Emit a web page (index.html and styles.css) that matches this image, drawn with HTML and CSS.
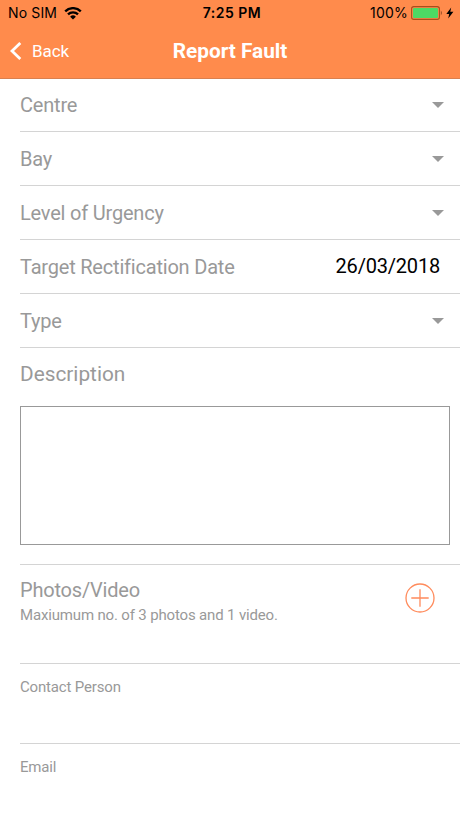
FILE: index.html
```html
<!DOCTYPE html>
<html lang="en">
<head>
    <meta charset="UTF-8">
    <meta name="viewport" content="width=device-width, initial-scale=1.0">
    <title>Report Fault</title>
    <link rel="stylesheet" href="styles.css">
</head>
<body>
    <header class="header">
        <div class="status-bar">
            <div class="status-left">
                <span class="carrier">No SIM</span>
                <svg class="wifi" width="18" height="13" viewBox="0 0 18 13">
                    <path d="M1.2 4.4a10.9 10.9 0 0 1 15.6 0M4 7.4a7 7 0 0 1 10 0" fill="none" stroke="#000" stroke-width="2.3"/>
                    <path d="M9 12.6L6.1 9.7a4.1 4.1 0 0 1 5.8 0z"/>
                </svg>
            </div>
            <div class="time">7:25 PM</div>
            <div class="status-right">
                <span class="percent">100%</span>
                <svg class="battery" width="43" height="14" viewBox="0 0 43 14">
                    <rect x="0.6" y="0.6" width="27.8" height="12.8" rx="2.2" fill="none" stroke="#a84e1c" stroke-width="1.1"/>
                    <rect x="2" y="2" width="25" height="10" rx="1" fill="#4cd964"/>
                    <path d="M29.8 4.6q2.4 2.4 0 4.8z" fill="#9c5027"/>
                    <path d="M40.2 1.4L35.3 7.9h2.9L37.2 12.4l5.2-6.6h-3.1z"/>
                </svg>
            </div>
        </div>
        <nav class="nav-bar">
            <a class="back">
                <svg width="12" height="18" viewBox="0 0 12 18">
                    <path d="M10.3 1L2 9l8.3 8" fill="none" stroke="#fff" stroke-width="2.8"/>
                </svg>
                <span>Back</span>
            </a>
            <h1 class="title">Report Fault</h1>
        </nav>
    </header>

    <main class="form">
        <div class="row">
            <span class="label">Centre</span>
            <span class="arrow"></span>
        </div>
        <div class="row">
            <span class="label">Bay</span>
            <span class="arrow"></span>
        </div>
        <div class="row">
            <span class="label">Level of Urgency</span>
            <span class="arrow"></span>
        </div>
        <div class="row">
            <span class="label">Target Rectification Date</span>
            <span class="date">26/03/2018</span>
        </div>
        <div class="row">
            <span class="label">Type</span>
            <span class="arrow"></span>
        </div>
        <div class="description">
            <label class="label wide" for="description">Description</label>
            <textarea id="description" class="textarea"></textarea>
        </div>
        <div class="photos">
            <div class="photos-text">
                <span class="label">Photos/Video</span>
                <span class="hint">Maxiumum no. of 3 photos and 1 video.</span>
            </div>
            <svg class="add" width="30" height="30" viewBox="0 0 30 30">
                <circle cx="15" cy="15" r="14" />
                <path d="M15 6.3v17.4M6.3 15h17.4" />
            </svg>
        </div>
        <div class="field">
            <span class="small-label">Contact Person</span>
        </div>
        <div class="field last">
            <span class="small-label">Email</span>
        </div>
    </main>
</body>
</html>
```

FILE: styles.css
```css
* {
    box-sizing: border-box;
}

body {
    margin: 0;
    background: white;
    font-family: Roboto, "Liberation Sans", sans-serif;
    color: #999;
    height: 818px;
    overflow: hidden;
}

/* Header */
.header {
    height: 79px;
    background: #ff8b4c;
    border-bottom: 1px solid #d9804f;
}

.status-bar {
    display: grid;
    grid-template-columns: 1fr auto 1fr;
    align-items: center;
    height: 26px;
    padding: 0 6px 0 8px;
    font-family: Inter, "Liberation Sans", sans-serif;
    font-size: 14px;
    line-height: 16px;
    color: black;
}

.status-left {
    display: flex;
    align-items: center;
    gap: 7px;
}

.status-right {
    display: flex;
    align-items: center;
    justify-content: flex-end;
    gap: 3px;
}

.carrier {
    letter-spacing: 0.15px;
}

.time {
    font-weight: 600;
    letter-spacing: 0.5px;
    padding-left: 2px;
}

.percent {
    letter-spacing: 0.2px;
}

.nav-bar {
    display: grid;
    grid-template-columns: 1fr auto 1fr;
    align-items: center;
    height: 50px;
    padding: 0 10px;
    color: white;
}

.back {
    display: flex;
    align-items: center;
    gap: 10px;
    font-size: 17px;
    letter-spacing: -0.1px;
}

.title {
    margin: 0;
    font-size: 20.8px;
    font-weight: 700;
}

/* Form rows */
.form {
    padding-left: 20px;
}

.row {
    display: flex;
    align-items: center;
    justify-content: space-between;
    height: 54px;
    padding-right: 20px;
    border-bottom: 1px solid #d4d4d4;
}

.row:first-child {
    height: 53px;
}

.label {
    font-size: 20px;
    line-height: 24px;
    letter-spacing: -0.2px;
}

.wide {
    font-size: 20.8px;
    letter-spacing: 0;
}

.arrow {
    width: 12px;
    margin-right: -4px;
    border: 6px solid transparent;
    border-top-color: #999;
    border-bottom: 0;
}

.date {
    font-size: 20px;
    letter-spacing: -0.2px;
    padding-bottom: 1px;
    color: black;
}

.description {
    height: 217px;
    padding: 14px 10px 0 0;
    border-bottom: 1px solid #d4d4d4;
}

.description .label {
    display: block;
}

.textarea {
    display: block;
    width: 430px;
    height: 139px;
    margin-top: 20px;
    border: 1px solid #999;
    resize: none;
}

.photos {
    display: flex;
    justify-content: space-between;
    height: 99px;
    padding: 13px 25px 0 0;
    border-bottom: 1px solid #d4d4d4;
}

.photos-text {
    display: flex;
    flex-direction: column;
}

.hint {
    margin-top: 4px;
    font-size: 15px;
    line-height: 18px;
    letter-spacing: -0.16px;
}

.add {
    margin-top: 5px;
    fill: none;
    stroke: #ff8b5c;
    stroke-width: 1.3;
}

.field {
    height: 80px;
    padding-top: 14px;
    border-bottom: 1px solid #d4d4d4;
}

.last {
    border-bottom: 0;
}

.small-label {
    display: block;
    font-size: 15px;
    line-height: 18px;
    letter-spacing: -0.17px;
}
```
